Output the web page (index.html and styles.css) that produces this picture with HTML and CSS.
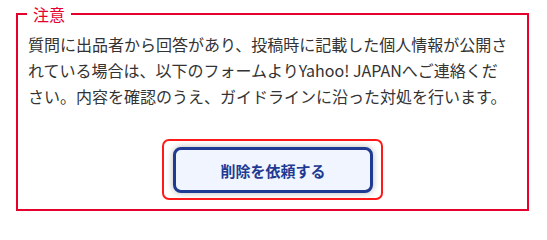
FILE: index.html
```html
<!DOCTYPE html>
<html lang="ja">
<head>
<meta charset="utf-8">
<link rel="stylesheet" href="styles.css">
</head>
<body>
<fieldset class="notice">
  <legend class="notice-title">注意</legend>
  <p class="notice-text">質問に出品者から回答があり、投稿時に記載した個人情報が公開されている場合は、以下のフォームよりYahoo! JAPANへご連絡ください。内容を確認のうえ、ガイドラインに沿った対処を行います。</p>
  <div class="actions">
    <span class="focus-ring">
      <button class="request-btn" type="button">削除を依頼する</button>
    </span>
  </div>
</fieldset>
</body>
</html>
```
FILE: styles.css
```css
html, body {
  margin: 0;
  padding: 0;
  background: #ffffff;
}
body {
  font-family: "Noto Sans CJK JP", "Noto Sans", sans-serif;
  color: #333333;
  padding: 4px 0 0 16px;
}
.notice {
  box-sizing: border-box;
  width: 513px;
  height: 207px;
  margin: 0;
  border: 2px solid #e6002d;
  padding: 0 18px 0 10px;
}
.notice-title {
  color: #e6002d;
  font-size: 16px;
  line-height: 20px;
  padding: 0 6px;
  margin-left: -1px;
}
.notice-text {
  margin: 7px 0 0 0;
  font-size: 16px;
  line-height: 26px;
}
.actions {
  display: flex;
  justify-content: center;
  margin: 30px -8px 0 0;
}
.focus-ring {
  display: inline-flex;
  border: 2px solid #ff1a1a;
  border-radius: 7px;
  padding: 6px 8px 5px 9px;
}
.request-btn {
  box-sizing: border-box;
  width: 200px;
  height: 46px;
  border: 3px solid #1f3a93;
  border-radius: 8px;
  background: #f0f5ff;
  color: #1f3a93;
  font-family: "Noto Sans CJK JP", "Noto Sans", sans-serif;
  font-size: 15px;
  font-weight: bold;
  box-shadow: 0 0 7px rgba(0, 0, 0, 0.28);
  cursor: pointer;
}
```
